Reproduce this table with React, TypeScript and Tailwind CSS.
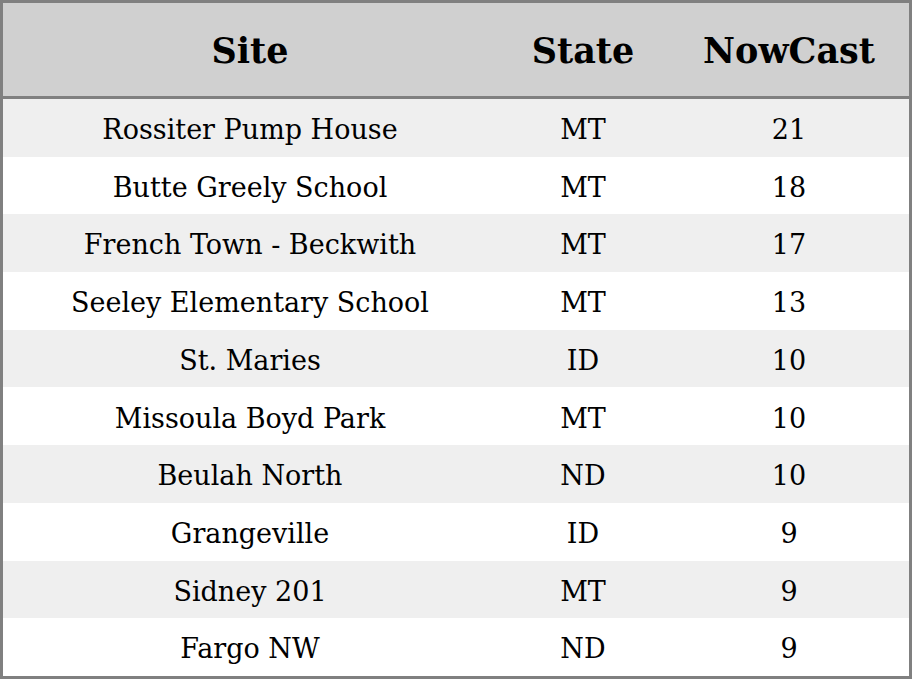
const rows = [
    { site: 'Rossiter Pump House', state: 'MT', nowcast: 21 },
    { site: 'Butte Greely School', state: 'MT', nowcast: 18 },
    { site: 'French Town - Beckwith', state: 'MT', nowcast: 17 },
    { site: 'Seeley Elementary School', state: 'MT', nowcast: 13 },
    { site: 'St. Maries', state: 'ID', nowcast: 10 },
    { site: 'Missoula Boyd Park', state: 'MT', nowcast: 10 },
    { site: 'Beulah North', state: 'ND', nowcast: 10 },
    { site: 'Grangeville', state: 'ID', nowcast: 9 },
    { site: 'Sidney 201', state: 'MT', nowcast: 9 },
    { site: 'Fargo NW', state: 'ND', nowcast: 9 },
];

const App = () => {
    return (
        <div className="w-[912px] h-[679px] border-[3px] border-[#808080] bg-white font-['DejaVu_Serif',serif] text-black">
            <div className="grid grid-cols-[494px_172px_240px] h-[96px] pt-[4px] items-center bg-[#d0d0d0] border-b-[3px] border-[#808080] text-[35px] font-bold text-center">
                <div>Site</div>
                <div>State</div>
                <div>NowCast</div>
            </div>
            {rows.map((row, i) => (
                <div
                    key={row.site}
                    className={`grid grid-cols-[494px_172px_240px] h-[57.7px] pt-[5px] items-center text-center text-[27px] ${i % 2 === 0 ? 'bg-[#efefef]' : 'bg-white'}`}
                >
                    <div>{row.site}</div>
                    <div>{row.state}</div>
                    <div>{row.nowcast}</div>
                </div>
            ))}
        </div>
    )
}

export default App
